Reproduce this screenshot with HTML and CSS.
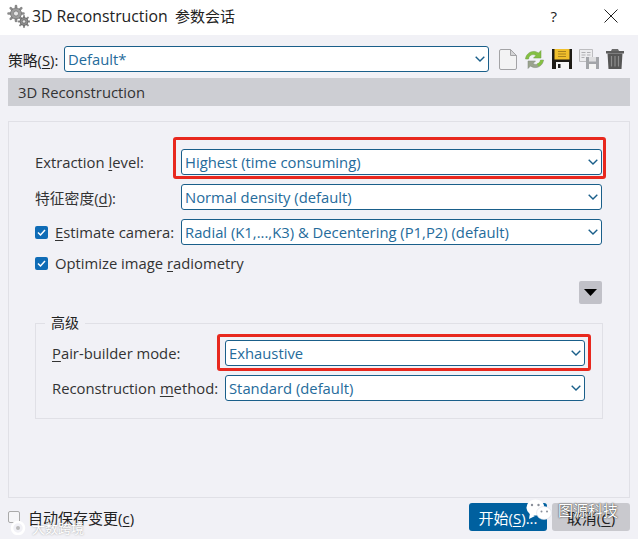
FILE: index.html
```html
<!DOCTYPE html>
<html lang="zh-CN">
<head>
  <meta charset="UTF-8" />
  <title>3D Reconstruction 参数会话</title>
  <link rel="stylesheet" href="styles.css">
</head>
<body>
  <header class="titlebar">
    <svg class="title-icon" width="24" height="24" viewBox="0 0 24 24">
      <g stroke="#8a8a8a" stroke-width="2.600" stroke-linecap="round">
        <path d="M10 2v15M2.500 9.500h15M4.700 4.200l10.600 10.600M15.300 4.200L4.700 14.800"/>
        <path d="M18 12v11M12.500 17.500h11M14.100 13.600l7.800 7.800M21.900 13.600l-7.800 7.800" stroke-width="2"/>
      </g>
      <circle cx="10" cy="9.500" r="5.500" fill="#9c9c9c" stroke="#666" stroke-width=".6"/>
      <circle cx="18" cy="17.500" r="4" fill="#8f8f8f" stroke="#555" stroke-width=".6"/>
      <circle cx="10" cy="9.500" r="2.500" fill="#e6e6e6" stroke="#666" stroke-width=".6"/>
      <circle cx="18" cy="17.500" r="1.700" fill="#e6e6e6" stroke="#555" stroke-width=".6"/>
    </svg>
    <h1 class="title">3D Reconstruction&nbsp; <span class="title-cjk">参数会话</span></h1>
    <span class="help">?</span>
    <svg class="close" width="14" height="14" viewBox="0 0 14 14"><path d="M.5.5l13 13M13.500.5l-13 13" stroke="#222" fill="none"/></svg>
  </header>

  <main class="dialog">
    <div class="preset">
      <label class="preset-label">策略(<u>S</u>):</label>
      <div class="combo preset-combo">
        <span>Default*</span>
        <svg class="chev" width="10" height="6" viewBox="0 0 10 6"><path d="M.7.700L5 5l4.300-4.300" fill="none" stroke="#1a5f8a" stroke-width="1.400"/></svg>
      </div>
      <div class="tools">
        <svg width="18" height="21" viewBox="0 0 18 21"><path d="M2 .5h9.500l6 6V19a1.500 1.500 0 0 1-1.500 1.500H2A1.500 1.500 0 0 1 .5 19V2A1.500 1.500 0 0 1 2 .5z" fill="#f3f3f4" stroke="#a3a3a6"/><path d="M11.500.5v6h6z" fill="#d4d4d6" stroke="#a3a3a6"/></svg>
        <svg width="21" height="21" viewBox="0 0 21 21"><path d="M1.500 10C2 4 9 0 14.500 4l2.500-2.500V9h-7.500l2.500-2.500C9 4.500 5 6 4.500 10z" fill="#84c043" stroke="#6d9a3c" stroke-width=".5"/><path d="M19.500 11c-.5 6-7.500 10-13 6L4 19.500V12h7.500L9 14.500c3 2 7 .5 7.500-3.500z" fill="#9aa48e" stroke="#7d8578" stroke-width=".5"/><path d="M19.500 11c-.5 3-2.500 5.500-5 6.500l-1.500-3c1.800-.5 3.200-1.800 3.500-3.500z" fill="#84c043"/></svg>
        <svg width="20" height="20" viewBox="0 0 20 20"><path d="M0 0h20v20H0z" fill="#1d1b16"/><path d="M2.500 0h15v10.500h-15z" fill="#f0bf2c"/><path d="M6 2.500h8M6 5h8M6 7.500h8" stroke="#a8821c"/><path d="M4 13h13v7H4z" fill="#f6f6f6"/><path d="M6 15h2.500v4H6z" fill="#222"/></svg>
        <svg width="20" height="20" viewBox="0 0 20 20"><path d="M.5.500h13v12H.5z" fill="#ececee" stroke="#bdbdc0"/><path d="M2.500 3.500h4M8 3.500h3.500M2.500 6h4M8 6h3.500M2.500 8.500h3" stroke="#b0b0b3"/><path d="M7 8h13v12H7z" fill="#a3a5a9"/><path d="M10 8h7v4.500h-7z" fill="#dedee0"/><path d="M10 15h7v5h-7z" fill="#f4f4f4"/></svg>
        <svg width="18" height="20" viewBox="0 0 18 20"><path d="M0 2h18v2.500H0z" fill="#5c5c5c"/><path d="M5 2l1-2h6l1 2z" fill="#6b6b6b"/><path d="M1.500 4.500h15L15.500 20h-13z" fill="#565656"/><path d="M5.500 7v10.500M9 7v10.500M12.500 7v10.500" stroke="#8c8c8c" stroke-width="1.200"/></svg>
      </div>
    </div>

    <h2 class="section">3D Reconstruction</h2>

    <section class="panel">
      <div class="row">
        <label class="row-label">Extraction <u>l</u>evel:</label>
        <div class="combo marked marked-top">
          <span>Highest (time consuming)</span>
          <svg class="chev" width="10" height="6" viewBox="0 0 10 6"><path d="M.7.700L5 5l4.300-4.300" fill="none" stroke="#1a5f8a" stroke-width="1.400"/></svg>
        </div>
      </div>
      <div class="row">
        <label class="row-label">特征密度(<u>d</u>):</label>
        <div class="combo">
          <span>Normal density (default)</span>
          <svg class="chev" width="10" height="6" viewBox="0 0 10 6"><path d="M.7.700L5 5l4.300-4.300" fill="none" stroke="#1a5f8a" stroke-width="1.400"/></svg>
        </div>
      </div>
      <div class="row">
        <label class="row-label check-label">
          <span class="check"><svg width="13" height="13" viewBox="0 0 13 13"><path d="M3 6.500l2.500 2.500L10 4" fill="none" stroke="#fff" stroke-width="1.500"/></svg></span>
          <span><u>E</u>stimate camera:</span>
        </label>
        <div class="combo">
          <span>Radial (K1,...,K3) &amp; Decentering (P1,P2) (default)</span>
          <svg class="chev" width="10" height="6" viewBox="0 0 10 6"><path d="M.7.700L5 5l4.300-4.300" fill="none" stroke="#1a5f8a" stroke-width="1.400"/></svg>
        </div>
      </div>
      <label class="check-label solo">
        <span class="check"><svg width="13" height="13" viewBox="0 0 13 13"><path d="M3 6.500l2.500 2.500L10 4" fill="none" stroke="#fff" stroke-width="1.500"/></svg></span>
        <span>Optimize image <u>r</u>adiometry</span>
      </label>
      <div class="more-row">
        <button class="more"><svg width="13" height="7" viewBox="0 0 13 7"><path d="M0 0h13L6.500 7z" fill="#000"/></svg></button>
      </div>

      <fieldset class="group">
        <legend>高级</legend>
        <div class="row">
          <label class="group-label"><u>P</u>air-builder mode:</label>
          <div class="combo marked marked-low">
            <span>Exhaustive</span>
            <svg class="chev" width="10" height="6" viewBox="0 0 10 6"><path d="M.7.700L5 5l4.300-4.300" fill="none" stroke="#1a5f8a" stroke-width="1.400"/></svg>
          </div>
        </div>
        <div class="row">
          <label class="group-label">Reconstruction <u>m</u>ethod:</label>
          <div class="combo">
            <span>Standard (default)</span>
            <svg class="chev" width="10" height="6" viewBox="0 0 10 6"><path d="M.7.700L5 5l4.300-4.300" fill="none" stroke="#1a5f8a" stroke-width="1.400"/></svg>
          </div>
        </div>
      </fieldset>
    </section>

    <footer class="bottom">
      <label class="autosave">
        <span class="check-empty"></span>
        <span>自动保存变更(<u>c</u>)</span>
      </label>
      <div class="buttons">
        <button class="btn btn-primary">开始(<u>S</u>)...</button>
        <button class="btn">取消(<u>C</u>)</button>
      </div>
    </footer>
  </main>

  <!-- watermarks over the screenshot -->
  <div class="wm wm-left">
    <svg width="16" height="14" viewBox="0 0 16 14"><circle cx="8" cy="7" r="6" fill="none" stroke="#fff" stroke-width="2.500"/><circle cx="8" cy="7" r="2" fill="#bbb"/></svg>
    <span>大数跨境</span>
  </div>
  <div class="wm wm-right">
    <svg width="26" height="22" viewBox="0 0 26 22"><ellipse cx="9.500" cy="8.500" rx="9" ry="8" fill="#fff"/><path d="M4 14l-1 6 6-3z" fill="#fff"/><ellipse cx="18" cy="14" rx="7.500" ry="6.500" fill="#fff" stroke="#d8dce6" stroke-width=".6"/><circle cx="6" cy="6" r="1.200" fill="#8a8f99"/><circle cx="12.500" cy="6" r="1.200" fill="#8a8f99"/><circle cx="15.500" cy="12.500" r="1" fill="#8a8f99"/><circle cx="21" cy="12.500" r="1" fill="#8a8f99"/></svg>
    <span>图源科技</span>
  </div>
</body>
</html>
```

FILE: styles.css
```css
* { box-sizing: border-box; }
html, body {
  height: 539px;
  overflow: hidden;
}
body {
  margin: 0;
  position: relative;
  background: #f1f1f6;
  color: #333;
  font-family: "Open Sans", "Noto Sans CJK SC", sans-serif;
  font-size: 14.800px;
}
u { text-underline-offset: 2px; }

.titlebar {
  height: 35px;
  background: #fff;
  display: flex;
  align-items: center;
  padding: 0 0 4px 6px;
  color: #222;
}
.title-icon { flex: none; }
.title {
  margin: 0 0 0 2px;
  font-size: 15.800px;
  font-weight: 400;
  flex: 1;
}
.title-cjk { font-size: 15px; margin-left: -1px; }
.help { font-size: 15px; margin-right: 47px; }
.close { margin-right: 20px; }

.dialog {
  height: 504px;
  padding: 11px 8px 0;
  display: flex;
  flex-direction: column;
}

.preset {
  display: flex;
  align-items: center;
  height: 26px;
}
.preset-label { width: 56px; flex: none; color: #222; }
.tools {
  display: flex;
  align-items: center;
  gap: 7px;
  margin-left: 10px;
}

.combo {
  flex: 1;
  height: 26px;
  border: 1px solid #1a5f8a;
  border-radius: 3px;
  background: #fff;
  color: #256b9b;
  display: flex;
  align-items: center;
  justify-content: space-between;
  padding: 0 3px 0 3px;
  font-size: 14.800px;
  white-space: nowrap;
}
.preset-combo { flex: none; width: 425px; }
.chev { flex: none; }

.section {
  margin: 6px 0 0;
  height: 28px;
  line-height: 29px;
  background: #cdced3;
  padding-left: 10px;
  font-size: 14.800px;
  font-weight: 400;
  color: #333;
}

.panel {
  margin-top: 15px;
  height: 377px;
  border: 1px solid #e0e0e6;
  padding: 27px 27px 0 26px;
}
.row {
  display: flex;
  align-items: center;
  margin-bottom: 9px;
}
.row-label { width: 146px; flex: none; }
.check-label {
  display: flex;
  align-items: center;
  gap: 7px;
  white-space: nowrap;
}
.solo { height: 24px; margin-top: -3px; }
.check {
  width: 13px;
  height: 13px;
  background: #0f6cb6;
  border-radius: 2px;
  flex: none;
  display: block;
}
.check svg { display: block; }
.more-row {
  display: flex;
  justify-content: flex-end;
  margin-top: 6px;
}
.more {
  width: 23px;
  height: 23px;
  padding: 0;
  border: none;
  border-radius: 2px;
  background: #c1c1c8;
  display: flex;
  align-items: center;
  justify-content: center;
}

.group {
  margin: 9px -1px 0 0;
  min-width: 0;
  border: 1px solid #e0e0e6;
  padding: 0 17px 16px 16px;
  height: 106px;
}
.group legend {
  margin-left: -7px;
  padding: 0 6px;
  color: #222;
  font-size: 14px;
  line-height: 20px;
}
.group .row { margin-bottom: 9px; }
.group .row:first-of-type { margin-top: 7px; }
.group-label { width: 173px; flex: none; white-space: nowrap; }

/* red marks drawn over the screenshot */
.marked { position: relative; }
.marked::after {
  content: "";
  position: absolute;
  border: 3px solid #e8281e;
  border-radius: 3px;
  pointer-events: none;
}
.marked-top::after { left: -9px; right: -5px; top: -13px; bottom: -5px; }
.marked-low::after { left: -9px; right: -7px; top: -7px; bottom: -6px; }

.bottom {
  display: flex;
  justify-content: space-between;
  align-items: center;
  margin-top: 5px;
  height: 28px;
}
.autosave {
  display: flex;
  align-items: center;
  gap: 8px;
  color: #222;
  font-size: 15px;
}
.check-empty {
  width: 12px;
  height: 12px;
  border: 1px solid #aaa;
  border-radius: 2px;
  background: #f6f6f8;
}
.buttons { display: flex; gap: 5px; }
.btn {
  width: 78px;
  height: 28px;
  padding: 0;
  border: none;
  border-radius: 3px;
  background: #c9c9ce;
  color: #222;
  font: inherit;
  font-size: 15px;
}
.btn-primary { background: #00609f; color: #fff; }

.wm {
  position: absolute;
  white-space: nowrap;
  display: flex;
}
.wm-left {
  left: 10px;
  top: 518px;
  align-items: center;
  gap: 6px;
  font-size: 13px;
  color: #fff;
  text-shadow: 0 0 2px #999;
}
.wm-right {
  left: 526px;
  top: 499px;
  align-items: flex-start;
  font-size: 15px;
  gap: 6px;
  color: #fff;
  text-shadow: 0 0 1px #333, 0 0 2px #555;
}
.wm-right span { line-height: 22px; }
```
